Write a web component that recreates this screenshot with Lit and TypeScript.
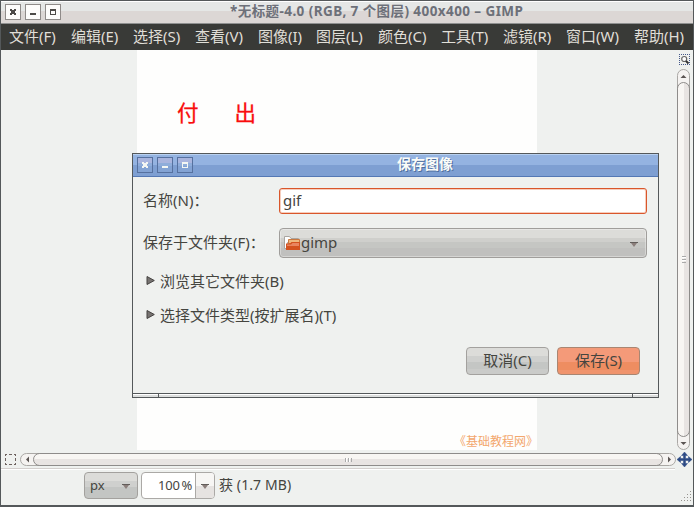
import { LitElement, html, css, svg } from "lit";
import { customElement, property } from "lit/decorators.js";

const MENUS: Array<[string, number]> = [
  ["文件(F)", 62], ["编辑(E)", 62], ["选择(S)", 62], ["查看(V)", 63],
  ["图像(I)", 58], ["图层(L)", 62], ["颜色(C)", 63], ["工具(T)", 62],
  ["滤镜(R)", 63], ["窗口(W)", 68], ["帮助(H)", 58],
];

@customElement("window-controls")
class WindowControls extends LitElement {
  @property({ type: Boolean, reflect: true }) active = false;

  static styles = css`
    :host { display: flex; gap: 4px; margin-bottom: 1px; --edge: #8f8b89; --fill: #fdfcfb; --ink: #4d4a48; }
    :host([active]) { --edge: #56719f; --fill: #9cb5e0; --ink: #f3f6f3; }
    .box { box-sizing: border-box; width: 16px; height: 16px; border: 1px solid var(--edge); background: var(--fill); }
    :host([active]) .box { background: linear-gradient(#a9b5de 0 5px, #8fadda 5px 8px, #83a3d4 8px); }
    svg { display: block; width: 14px; height: 14px; fill: var(--ink); }
  `;

  render() {
    const glyphs = [
      "M4 4h2v1h2v-1h2v2h-1v2h1v2h-2v-1h-2v1h-2v-2h1v-2h-1z",
      "M4 8h6v2h-6z",
      "M4 4h6v6h-6zM5 6v3h4v-3z",
    ];
    return glyphs.map((d) => html`<div class="box"><svg viewBox="0 0 14 14" shape-rendering="crispEdges">${svg`<path fill-rule="evenodd" d=${d}></path>`}</svg></div>`);
  }
}

@customElement("scroll-bar")
class ScrollBar extends LitElement {
  @property({ type: Boolean, reflect: true }) vertical = false;

  static styles = css`
    :host { display: flex; box-sizing: border-box; border: 1px solid #aaa8a5; border-radius: 7px; background: #f5f3f1; }
    :host([vertical]) { flex-direction: column; }
    .end { flex: none; width: 12px; height: 11px; display: flex; align-items: center; justify-content: center; }
    :host([vertical]) .end { width: 11px; height: 12px; }
    .thumb { flex: 1; display: flex; align-items: center; justify-content: center; box-sizing: border-box;
      margin: -1px 0; border: 1px solid #8e8c8a; border-radius: 7px; background: linear-gradient(#f8f6f3 0 50%, #e8e4e2 50%); }
    :host([vertical]) .thumb { margin: 0 -1px; background: linear-gradient(90deg, #f8f6f3 0 50%, #e8e4e2 50%); }
    .grip { width: 7px; height: 4px; background: repeating-linear-gradient(90deg, #aaa 0 1px, #fff 1px 2px, transparent 2px 3px); }
    :host([vertical]) .grip { width: 4px; height: 7px; background: repeating-linear-gradient(#aaa 0 1px, #fff 1px 2px, transparent 2px 3px); }
    svg { display: block; width: 7px; height: 7px; fill: #5b5553; }
  `;

  render() {
    const arrow = (d: string) => html`<div class="end"><svg viewBox="0 0 7 7">${svg`<path d=${d}></path>`}</svg></div>`;
    return html`
      ${arrow(this.vertical ? "M.5 5h6L3.5 2z" : "M5 .5v6L2 3.5z")}
      <div class="thumb"><div class="grip"></div></div>
      ${arrow(this.vertical ? "M.5 2h6L3.5 5z" : "M2 .5v6L5 3.5z")}
    `;
  }
}

@customElement("save-dialog")
class SaveDialog extends LitElement {
  static styles = css`
    :host { display: flex; flex-direction: column; box-sizing: border-box; width: 527px; height: 245px;
      border: 1px solid #54585a; background: #eff1ef; color: #45453f; font-size: 15px; line-height: 20px; }
    .title { flex: none; box-sizing: border-box; height: 23px; display: grid; grid-template-columns: 60px 1fr 5px; align-items: center;
      padding-left: 4px; border-top: 1px solid #b9d1f0; border-bottom: 1px solid #5478b4;
      background: linear-gradient(#94b3e1 0 10px, #7e9fd2 10px); }
    .title b { color: #fbfcf9; font-size: 14px; text-align: center; text-shadow: 1px 1px 0 #4f6f9f; line-height: 20px; margin-top: -4px; }
    .form { flex: 1; display: flex; flex-direction: column; padding: 11px 11px 0 10px; }
    .row { display: grid; grid-template-columns: 136px 1fr; align-items: center; }
    .row > span { padding-bottom: 2px; }
    .row + .row { margin-top: 14px; }
    .entry { box-sizing: border-box; height: 26px; padding: 1px 3px; background: #fff; border: 1px solid #d9562b; border-radius: 3px;
      box-shadow: inset 0 0 0 1px #f6cdbc; }
    .combo { box-sizing: border-box; height: 30px; display: flex; align-items: center; padding: 0 8px 0 4px;
      border: 1px solid #a09e9b; border-radius: 4px; box-shadow: inset 0 0 0 1px #ffffff55;
      background: linear-gradient(#dcdcd9 0 9px, #cfcfcc 9px 13px, #c5c6c3 13px 19px, #c0c0be 19px); }
    .folder { width: 17px; height: 16px; }
    .grow { flex: 1; padding-bottom: 2px; }
    .drop { width: 8px; height: 6px; margin-top: 3px; }
    .expander { display: flex; align-items: center; margin: 14px 0 0 3px; height: 20px; }
    .expander span { padding-bottom: 2px; }
    .expander svg { width: 9px; height: 11px; margin: -3px 5px 0 0; }
    .actions { display: flex; justify-content: flex-end; gap: 8px; margin: 21px 7px 0 0; }
    .btn { box-sizing: border-box; width: 83px; height: 28px; padding: 2px 0; text-align: center; border: 1px solid #a3a19e; border-radius: 4px;
      background: linear-gradient(#dcdcd9 0 8px, #cfd0ce 8px 14px, #c4c6c4 14px 21px, #cacbc9 21px); }
    .primary { border-color: #a98672; background: linear-gradient(#f49a79 0 14px, #ee8d61 14px 22px, #f0946d 22px); }
    .frame { flex: none; height: 3px; margin: 0; border-top: 1px solid #54585a; display: flex; justify-content: space-between; background: linear-gradient(#fff 0 1px, #dcdedd 1px); }
    .corner { box-sizing: border-box; width: 26px; border-right: 1px solid #54585a; }
    .corner.right { border-right: 0; border-left: 1px solid #54585a; }
  `;

  render() {
    const tri = html`<svg viewBox="0 0 9 11"><path d="M1 1.5v8L8.3 5.500z" fill="#777371" stroke="#444240"></path></svg>`;
    return html`
      <div class="title"><window-controls active></window-controls><b>保存图像</b></div>
      <div class="form">
        <div class="row"><span>名称(N)：</span><div class="entry">gif</div></div>
        <div class="row"><span>保存于文件夹(F)：</span>
          <div class="combo">
            <svg class="folder" viewBox="0 0 17 16">
              <path d="M.5 13.500v-12h5l1.500 2h7.500v4h-11v6z" fill="#fff" stroke="#aaa5a0"></path>
              <path d="M4.500 4.500h11v4h-11z" fill="#eeb77d" stroke="#c97840"></path>
              <path d="M2 8.500h4l1.500-1.500h8.500v8h-14z" fill="#d4521f"></path>
              <path d="M3 9.500h4l1.500-1.500h6.500v3h-12z" fill="#e9855f"></path>
            </svg>
            <span class="grow">gimp</span>
            <svg class="drop" viewBox="0 0 8 6"><path d="M1 1h6L4 5z" fill="#8b7e7b"></path><path d="M0 .5h8" stroke="#625d5a"></path></svg>
          </div>
        </div>
        <div class="expander">${tri}<span>浏览其它文件夹(B)</span></div>
        <div class="expander">${tri}<span>选择文件类型(按扩展名)(T)</span></div>
        <div class="actions"><div class="btn">取消(C)</div><div class="btn primary">保存(S)</div></div>
      </div>
      <div class="frame"><div class="corner"></div><div class="corner right"></div></div>
    `;
  }
}

@customElement("app-root")
class AppRoot extends LitElement {
  static styles = css`
    :host { position: relative; display: flex; flex-direction: column; box-sizing: border-box; width: 694px; height: 507px; overflow: hidden;
      border: 1px solid #54585a; background: #eff1ef; color: #45453f;
      font-family: "Noto Sans", "Noto Sans CJK SC", sans-serif; font-size: 15px; line-height: 20px; white-space: nowrap; }
    .title { flex: none; box-sizing: border-box; height: 23px; display: flex; align-items: center; padding: 0 0 0 4px;
      border-top: 1px solid #fff; border-bottom: 1px solid #8f9090; background: linear-gradient(#e5e7e6 0 9px, #dcd7d5 9px); }
    .title b { margin: -3px 0 0 169px; font-size: 13.5px; letter-spacing: .42px; color: #6d7079; }
    .menu { flex: none; box-sizing: border-box; height: 26px; display: flex; padding: 2px 0 0 8px; background: #393a37; color: #e0dfd8; }
    .item { flex: none; }
    .work { flex: none; height: 402px; display: flex; }
    .side { width: 136px; flex: none; }
    .canvas { box-sizing: border-box; width: 400px; height: 400px; display: flex; flex-direction: column; justify-content: space-between; background: #fefefd; }
    .words { display: flex; gap: 36px; padding: 48px 0 0 40px; color: #f90d0d; font-size: 21.5px; line-height: 30px; -webkit-text-stroke: .3px #f90d0d; }
    .credit { align-self: flex-end; margin: 0 -1px -1px 0; font-size: 12px; line-height: 18px; color: #f3a76d; }
    .rail { margin-left: auto; width: 16px; display: flex; flex-direction: column; align-items: center; margin-right: 1px; }
    .zoom { width: 11px; height: 11px; margin: 4px 0; }
    .rail scroll-bar { width: 13px; height: 381px; margin-right: 1px; }
    .bottom { flex: none; display: flex; align-items: center; height: 15px; padding-left: 4px; }
    .mask { width: 11px; height: 11px; margin-right: 4px; }
    .bottom scroll-bar { width: 656px; height: 13px; }
    .nav { width: 15px; height: 15px; margin-left: 1px; }
    .status { flex: none; height: 33px; display: flex; align-items: flex-start; padding-left: 83px; margin-top: 1px; }
    .line { height: 1px; margin-top: 1px; width: 674px; flex: none; background: #d3cfcd; border-bottom: 1px solid #fff; margin-bottom: 1px; }
    .unit { box-sizing: border-box; width: 54px; height: 27px; display: flex; align-items: center; justify-content: space-between; padding: 0 7px 0 5px;
      font-size: 13px; border: 1px solid #a3a19e; border-radius: 4px; background: linear-gradient(#dcdcd9 0 8px, #cfd0ce 8px 14px, #c3c5c3 14px); }
    .unit span { padding-bottom: 2px; }
    .unit .drop { margin-top: 3px; }
    .scale { box-sizing: border-box; width: 74px; height: 27px; margin: 0 4px 0 3px; display: flex; border: 1px solid #aba9a6; border-radius: 4px; background: #fff; font-size: 13px; overflow: hidden; }
    .value { width: 50px; padding-top: 2px; text-align: right; margin-right: 3px; letter-spacing: -.2px; word-spacing: -1.5px; }
    .arrow { flex: 1; display: flex; align-items: center; justify-content: center; border-left: 1px solid #aba9a6; background: linear-gradient(#f7f6f4 0 13px, #e6e3e1 13px); }
    .arrow .drop { margin-top: 2px; }
    .drop { width: 8px; height: 6px; }
    .memory { padding-top: 3px; font-size: 14px; letter-spacing: .1px; }
    .grip { align-self: flex-end; margin: 0 1px 3px auto; width: 11px; height: 11px; }
    .frame { flex: 1; border-top: 1px solid #54585a; display: flex; justify-content: space-between; background: linear-gradient(#fff 0 1px, #dcdedd 1px); }
    .corner { box-sizing: border-box; width: 26px; border-right: 1px solid #54585a; }
    .corner.right { border-right: 0; border-left: 1px solid #54585a; }
    save-dialog { position: absolute; left: 131px; top: 152px; }
  `;

  render() {
    const drop = html`<svg class="drop" viewBox="0 0 8 6"><path d="M1 1h6L4 5z" fill="#8b7e7b"></path><path d="M0 .5h8" stroke="#625d5a"></path></svg>`;
    const dots = [[9, 0], [6, 3], [9, 3], [3, 6], [6, 6], [9, 6], [0, 9], [3, 9], [6, 9], [9, 9]];
    return html`
      <div class="title"><window-controls></window-controls><b>*无标题-4.0 (RGB, 7 个图层) 400x400 – GIMP</b></div>
      <div class="menu">${MENUS.map(([name, width]) => html`<span class="item" style="width:${width}px">${name}</span>`)}</div>
      <div class="work">
        <div class="side"></div>
        <div class="canvas">
          <div class="words"><span>付</span><span>出</span></div>
          <div class="credit">《基础教程网》</div>
        </div>
        <div class="rail">
          <svg class="zoom" viewBox="0 0 11 11"><path d="M0 .5h11M0 10.500h11M.5 0v11M10.500 0v11" fill="none" stroke="#46598a" stroke-dasharray="1 1"></path><circle cx="5.200" cy="5" r="2.500" fill="#fff" stroke="#666" stroke-width="1.200"></circle><path d="M7 7l2.500 2.500" stroke="#333" stroke-width="2"></path></svg>
          <scroll-bar vertical></scroll-bar>
        </div>
      </div>
      <div class="bottom">
        <svg class="mask" viewBox="0 0 11 11"><path d="M0 .5h11M0 10.500h11M.5 0v11M10.500 0v11" fill="none" stroke="#6d625f" stroke-dasharray="3 2" stroke-dashoffset="1"></path></svg>
        <scroll-bar></scroll-bar>
        <svg class="nav" viewBox="0 0 15 15"><path d="M7.500 0l3 3.500h-2v3h3v-2l3.500 3-3.500 3v-2h-3v3h2l-3 3.500-3-3.500h2v-3h-3v2L0 7.500l3.500-3v2h3v-3h-2z" fill="#2c4a85" stroke="#2c4a85" stroke-width=".5"></path></svg>
      </div>
      <div class="line"></div>
      <div class="status">
        <div class="unit"><span>px</span>${drop}</div>
        <div class="scale"><span class="value">100 %</span><span class="arrow">${drop}</span></div>
        <span class="memory">获 (1.7 MB)</span>
        <svg class="grip" viewBox="0 0 11 11">${dots.map(([x, y]) => svg`<rect x=${x} y=${y} width="1" height="1" fill="#96938f"></rect>`)}</svg>
      </div>
      <div class="frame"><div class="corner"></div><div class="corner right"></div></div>
      <save-dialog></save-dialog>
    `;
  }
}
